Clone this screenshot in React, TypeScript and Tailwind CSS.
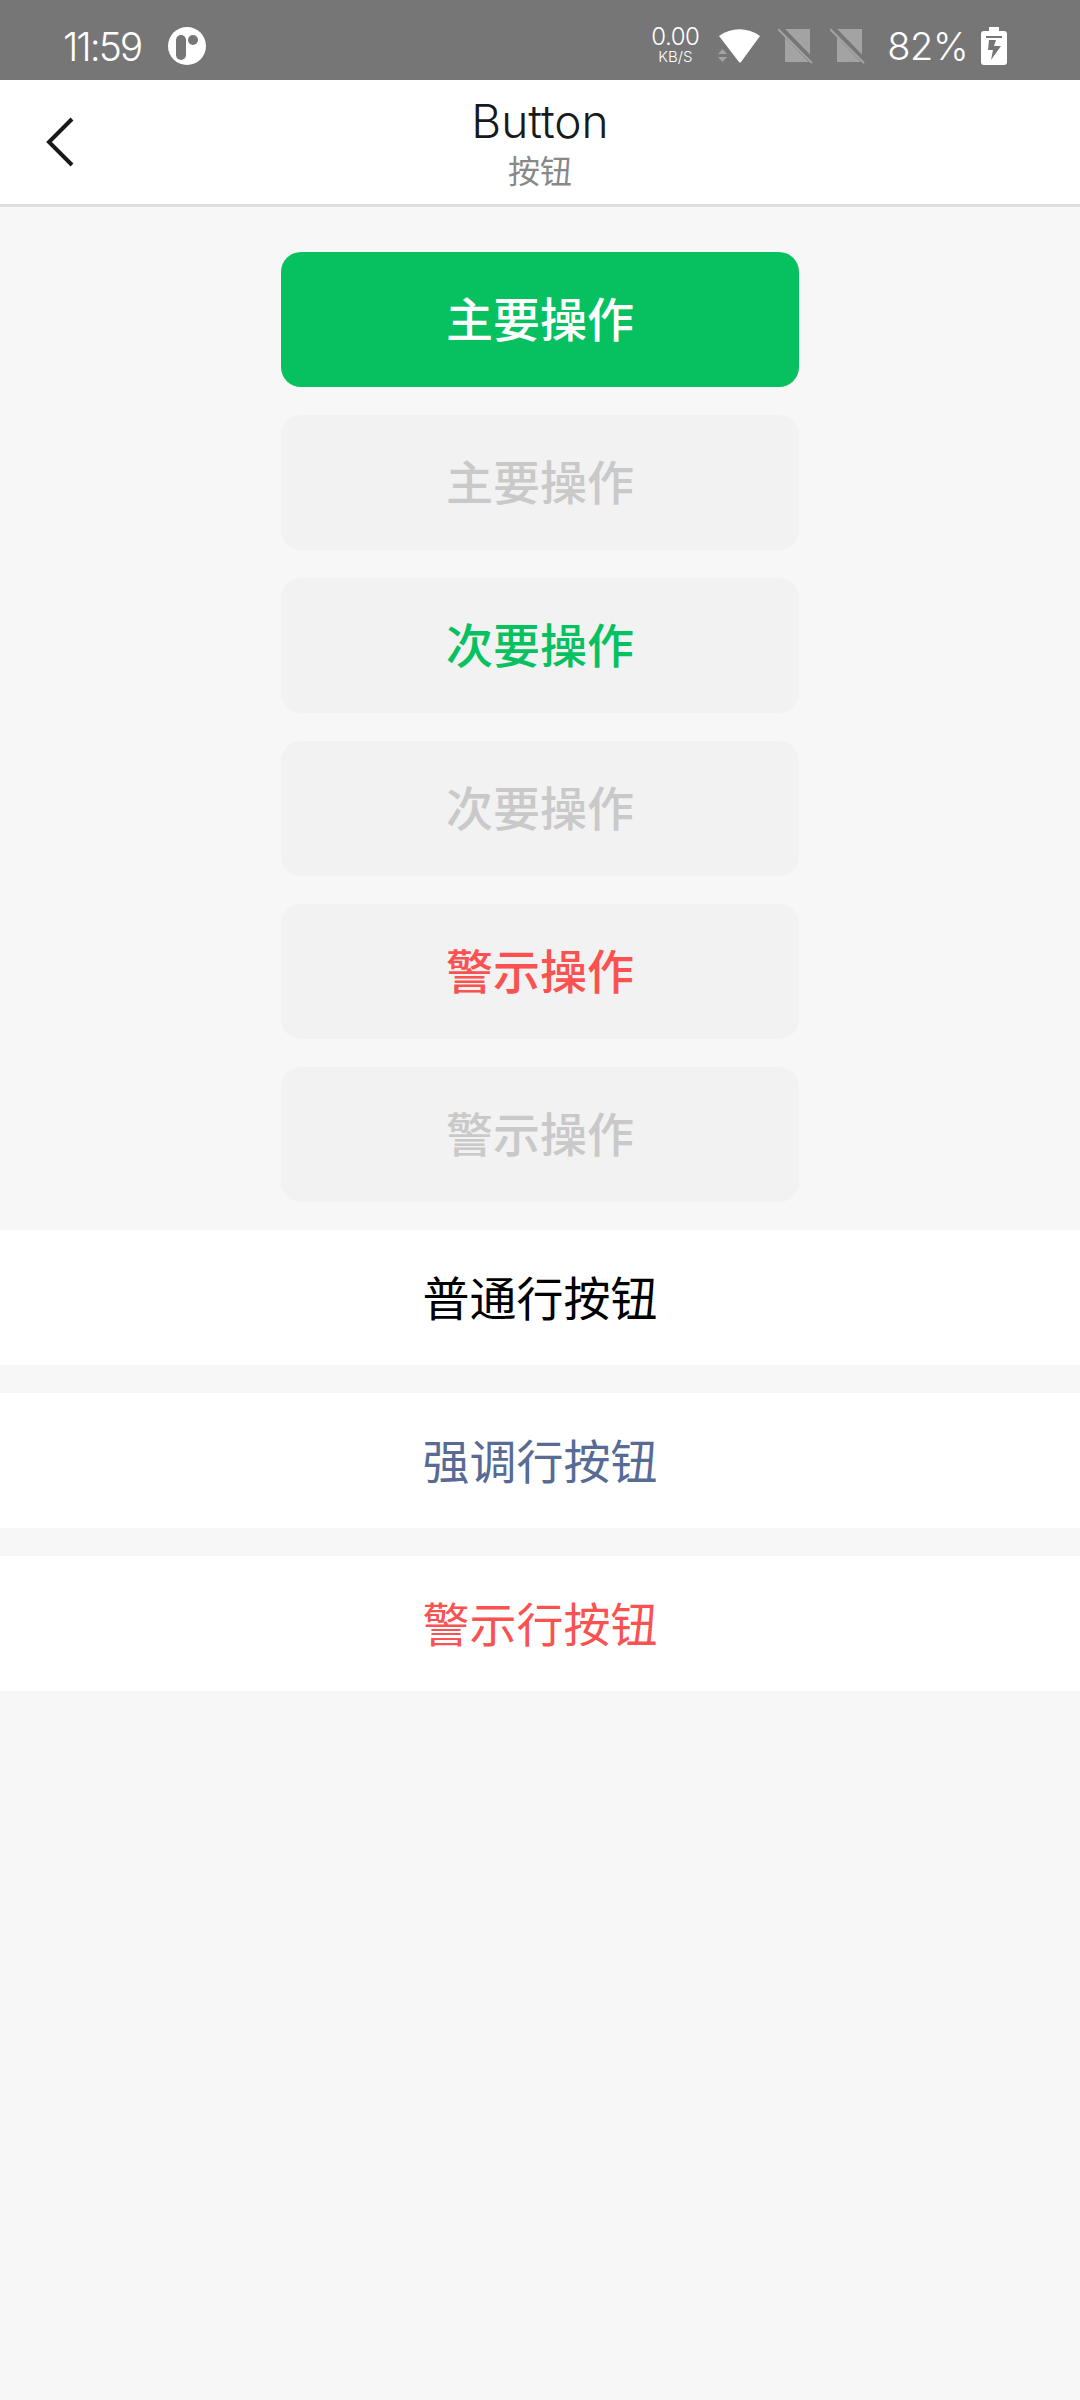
const cjk = "font-['Noto_Sans_CJK_SC',sans-serif]";

const blocks = [
  { label: "主要操作", box: "bg-[#07c160]", text: "text-white" },
  { label: "主要操作", box: "bg-[#f2f2f2]", text: "text-[#c9c9c9]" },
  { label: "次要操作", box: "bg-[#f2f2f2]", text: "text-[#07c160]" },
  { label: "次要操作", box: "bg-[#f2f2f2]", text: "text-[#c9c9c9]" },
  { label: "警示操作", box: "bg-[#f2f2f2]", text: "text-[#fa5151]" },
  { label: "警示操作", box: "bg-[#f2f2f2]", text: "text-[#c9c9c9]" },
];

const rows = [
  { label: "普通行按钮", text: "text-black" },
  { label: "强调行按钮", text: "text-[#576b95]" },
  { label: "警示行按钮", text: "text-[#fa5151]" },
];

function AppBadge() {
  return (
    <svg width="38" height="38" viewBox="0 0 38 38">
      <circle cx="19" cy="19" r="19" fill="#fff" />
      <rect x="8" y="8" width="10" height="25" rx="5" fill="#767676" />
      <circle cx="25" cy="13" r="5" fill="#767676" />
    </svg>
  );
}

function Wifi() {
  return (
    <svg width="43" height="36" viewBox="0 0 43 36">
      <path d="M1 8 C13 -1 30 -1 42 8 L23 34 Q22 35 21 34 Z" fill="#fff" />
      <path d="M0 26 L4.5 21 L9 26 Z M0 29 L9 29 L4.5 34 Z" fill="#a3a3a3" />
    </svg>
  );
}

function NoSim() {
  return (
    <svg width="36" height="36" viewBox="0 0 36 36">
      <path d="M7 1 H32 V34 H7 Z" fill="#a3a3a3" />
      <path d="M2 0 L36 35" stroke="#767676" strokeWidth="6" />
      <path d="M0 1 L34 35" stroke="#a3a3a3" strokeWidth="2" />
    </svg>
  );
}

function Battery() {
  return (
    <svg width="26" height="38" viewBox="0 0 26 38">
      <path d="M8 0 H18 V4 H23 Q26 4 26 7 V35 Q26 38 23 38 H3 Q0 38 0 35 V7 Q0 4 3 4 H8 Z" fill="#fff" />
      <path d="M5 9 H21 V11 H5 Z" fill="#767676" />
      <path d="M8 13 H15 L13 19 H20 L10 33 L12 23 H7 Z" fill="#767676" />
    </svg>
  );
}

export default function App() {
  return (
    <div className={`w-[1080px] h-[2400px] flex flex-col bg-[#f7f7f7] ${cjk}`}>
      <div className="h-[80px] pt-[12px] bg-[#767676] flex items-center text-white font-['Inter',sans-serif] font-light">
        <span className="ml-[63px] text-[39px] tracking-[-2px] leading-none">11:59</span>
        <span className="ml-[27px] flex"><AppBadge /></span>
        <div className="ml-auto mr-[73px] flex items-center">
          <div className="flex flex-col items-center mb-[2px]">
            <span className="text-[24px] tracking-[-0.5px] h-[23px] leading-[23px]">0.00</span>
            <span className="text-[15px] h-[16px] leading-[16px] mt-[1px]">KB/S</span>
          </div>
          <div className="ml-[19px] flex"><Wifi /></div>
          <div className="ml-[17px] flex"><NoSim /></div>
          <div className="ml-[16px] flex"><NoSim /></div>
          <span className="ml-[21px] text-[38px] tracking-[-0.5px] leading-none">82%</span>
          <div className="ml-[13px] flex"><Battery /></div>
        </div>
      </div>

      <div className="h-[127px] relative bg-white border-b-[3px] border-[#dedede] flex flex-col items-center">
        <svg className="absolute left-[46px] top-[37px]" width="28" height="50" viewBox="0 0 28 50" fill="none">
          <path d="M26 2 L3 25 L26 48" stroke="#191919" strokeWidth="4" />
        </svg>
        <span className="mt-[15px] h-[52px] text-[46px] leading-[52px] text-[#191919] font-['Inter',sans-serif] font-light">Button</span>
        <span className="mt-[3px] h-[38px] text-[32px] leading-[38px] text-[#888888]">按钮</span>
      </div>

      <div className="pt-[45px] flex flex-col items-center gap-[28px]">
        {blocks.map((b, i) => (
          <div key={i} className={`w-[518px] h-[135px] pb-[4px] rounded-[20px] flex items-center justify-center text-[47px] font-medium ${b.box} ${b.text}`}>
            {b.label}
          </div>
        ))}
      </div>

      <div className="mt-[28px] flex flex-col gap-[28px]">
        {rows.map((r) => (
          <div key={r.label} className={`h-[135px] pb-[3px] bg-white flex items-center justify-center text-[47px] ${r.text}`}>
            {r.label}
          </div>
        ))}
      </div>
    </div>
  );
}
